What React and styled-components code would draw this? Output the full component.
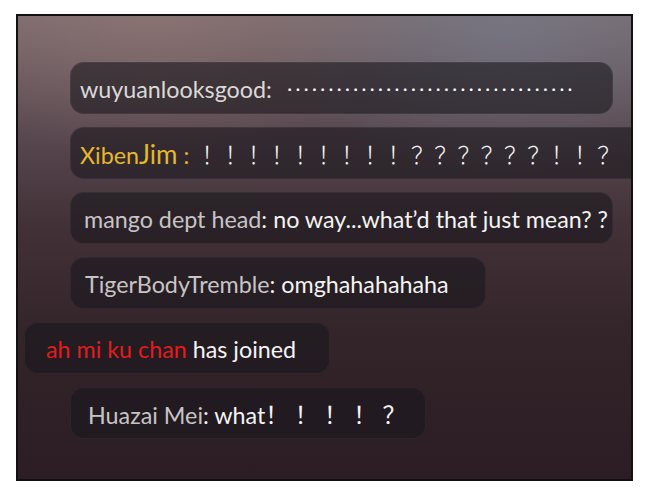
import React from 'react'
import styled, { createGlobalStyle } from 'styled-components'

const GlobalStyle = createGlobalStyle`
  html, body {
    margin: 0;
    padding: 0;
    background: #ffffff;
  }
`

const messages = [
  { indent: 52, width: 543, pad: 10, name: 'wuyuanlooksgood:', dots: 35 },
  { indent: 52, width: 600, pad: 10, xiben: true, text: '！！！！！！！！！？？？？？？！！？' },
  { indent: 52, width: 543, pad: 14, name: 'mango dept head', text: ': no way...what\u2019d that just mean? ?' },
  { indent: 52, width: 416, pad: 15, name: 'TigerBodyTremble', text: ': omghahahahaha' },
  { indent: 6, width: 306, pad: 22, name: 'ah mi ku chan', text: ' has joined', red: true },
  { indent: 52, width: 356, pad: 18, name: 'Huazai Mei', text: ': what！ ！ ！ ！ ？' },
]

const App = () => {
  return (
    <>
      <GlobalStyle />
      <Panel>
        <Feed>
          {messages.map((m, i) => (
            <Bubble key={i} $indent={m.indent} $width={m.width} $pad={m.pad}>
              {m.xiben ? (
                <Line>
                  <Name $color="#e6b82a">Xiben<Big>Jim</Big> : </Name>
                  <Wide>{m.text}</Wide>
                </Line>
              ) : m.dots ? (
                <Line>
                  <Name $color="#dcd8d8">{m.name}</Name>
                  <Dots>{'·'.repeat(m.dots)}</Dots>
                </Line>
              ) : (
                <Line>
                  <Name $color={m.red ? '#e41c1c' : '#c9c4c4'}>{m.name}</Name>
                  <Body>{m.text}</Body>
                </Line>
              )}
            </Bubble>
          ))}
        </Feed>
      </Panel>
    </>
  )
}

export default App

const Panel = styled.div`
  box-sizing: border-box;
  margin: 14px 0 0 16px;
  width: 617px;
  height: 467px;
  border: 2px solid #141012;
  overflow: hidden;
  background:
    radial-gradient(ellipse 45% 30% at 22% 0%, rgba(160, 125, 120, 0.45), transparent 100%),
    radial-gradient(ellipse 40% 30% at 80% 4%, rgba(120, 130, 150, 0.5), transparent 100%),
    linear-gradient(180deg, #786a6e 0%, #5c4c53 22%, #423238 45%, #33242a 70%, #2b1d23 100%);
`

const Feed = styled.div`
  display: flex;
  flex-direction: column;
  align-items: flex-start;
  gap: 13px;
  padding-top: 46px;
`

const Bubble = styled.div`
  box-sizing: border-box;
  display: flex;
  align-items: center;
  flex-shrink: 0;
  height: 52px;
  width: ${(p) => p.$width}px;
  margin-left: ${(p) => p.$indent}px;
  padding: 2px 12px 0 ${(p) => p.$pad}px;
  border-radius: 14px;
  background: rgba(24, 22, 27, 0.58);
  box-shadow: inset 0 0 0 1px rgba(255, 255, 255, 0.05);
`

const Line = styled.div`
  display: flex;
  align-items: baseline;
  white-space: pre;
  font-family: Lato, "Noto Sans CJK SC", sans-serif;
  font-size: 23.3px;
  color: #f5f3f3;
`

const Name = styled.span`
  color: ${(p) => p.$color};
`

const Big = styled.span`
  font-size: 26px;
`

const Body = styled.span`
  color: #f5f3f3;
`

const Wide = styled.span`
  font-family: "Noto Sans CJK SC", sans-serif;
  font-size: 23.3px;
  font-weight: 300;
  color: #f5f3f3;
  margin-left: 6px;
`

const Dots = styled.span`
  margin-left: 16px;
  font-size: 14px;
  font-weight: 700;
  letter-spacing: 4.4px;
  color: #ffffff;
  position: relative;
  top: -4px;
`
